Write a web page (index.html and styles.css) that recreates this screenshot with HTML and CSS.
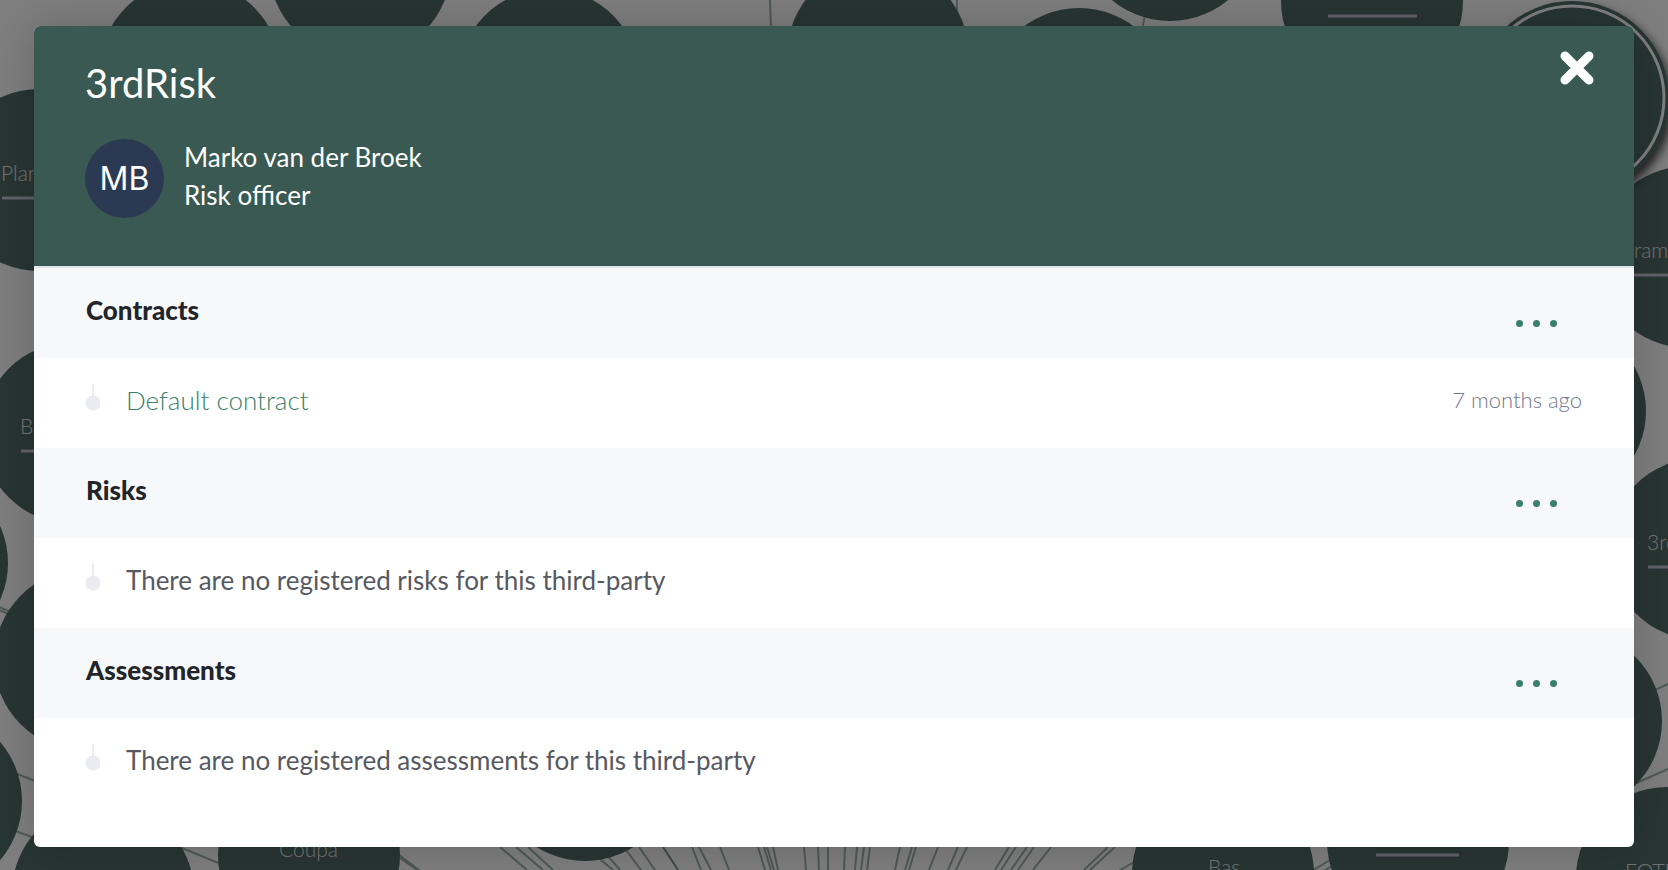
FILE: index.html
```html
<!DOCTYPE html>
<html lang="en">
<head>
  <meta charset="UTF-8">
  <meta name="viewport" content="width=device-width, initial-scale=1.0">
  <title>3rdRisk</title>
  <link rel="stylesheet" href="styles.css">
</head>
<body>
  <!-- third-party graph behind the modal -->
  <svg class="graph" width="1668" height="870" aria-hidden="true">
    <defs>
      <filter id="node-shadow" x="-20%" y="-20%" width="140%" height="140%">
        <feDropShadow dx="4" dy="6" stdDeviation="5" flood-color="#000" flood-opacity="0.7"/>
      </filter>
    </defs>
    <g class="edges">
      <path d="M770 0L771 30M957 0L956 30M1146 10L1142 30"/>
      <path d="M-10 603L20 616M-10 606L20 619M10 771L40 783M10 829L40 840M170 843L240 872"/>
      <path d="M390 851L420 872M394 851L424 874M500 847L527 870M516 847L543 870M528 847L553 870"/>
      <path d="M594 854L613 870M600 847L620 870M620 842L641 870M639 847L655 870"/>
      <path d="M692 847L701 870M699 847L711 870M720 847L729 870M758 847L765 870M764 847L771 870M767 847L774 870M773 847L778 870"/>
      <path d="M804 847L806 870M818 847L819 870M828 847L828 870M845 847L844 870M857 847L855 870M864 847L861 870M870 847L867 870"/>
      <path d="M900 847L895 870M912 847L905 870M916 847L909 870M938 847L929 870M958 847L948 870M967 847L956 870"/>
      <path d="M1009 847L995 870M1016 847L1001 870M1027 847L1011 870M1034 847L1018 870M1051 847L1033 870"/>
      <path d="M1108 847L1084 870M1115 847L1090 870M1134 862L1117 872M1300 878L1335 857M1300 886L1335 864M1560 879L1590 866"/>
      <path d="M1640 697L1668 684M1630 786L1668 769"/>
      <path class="edge-strong" d="M663 847L678 870"/>
    </g>
    <g class="nodes">
      <circle cx="190" cy="72" r="91"/>
      <circle cx="360" cy="-33" r="91"/>
      <circle cx="549" cy="80" r="91"/>
      <circle cx="878" cy="55" r="91"/>
      <circle cx="1079" cy="99" r="91"/>
      <circle cx="1170" cy="-70" r="91"/>
      <circle cx="1372" cy="1" r="91"/>
      <circle cx="1688" cy="257" r="91"/>
      <circle cx="1555" cy="411" r="91"/>
      <circle cx="1700" cy="549" r="91"/>
      <circle cx="1571" cy="721" r="91"/>
      <circle cx="1667" cy="878" r="91"/>
      <circle cx="1418" cy="841" r="91"/>
      <circle cx="1223" cy="874" r="91"/>
      <circle cx="585" cy="770" r="91"/>
      <circle cx="309" cy="855" r="91"/>
      <circle cx="103" cy="893" r="91"/>
      <circle cx="-69" cy="801" r="91"/>
      <circle cx="85" cy="660" r="91"/>
      <circle cx="-83" cy="563" r="91"/>
      <circle cx="73" cy="433" r="91"/>
      <circle cx="39" cy="180" r="91"/>
      <circle cx="1572" cy="98" r="97" filter="url(#node-shadow)"/>
    </g>
    <circle class="node-ring" cx="1572" cy="98" r="92"/>
    <g class="node-lines">
      <path d="M1328 16H1417M2 198H60M21 451H60M1600 275H1668M1648 567H1668M1376 855H1459"/>
    </g>
    <g class="node-labels">
      <text x="1" y="181">Plan</text>
      <text x="20" y="434">Br</text>
      <text x="1634" y="258">ram</text>
      <text x="1647" y="550">3rd</text>
      <text x="279" y="857">Coupa</text>
      <text x="1208" y="875">Bas</text>
      <text x="1625" y="879">FOTF</text>
    </g>
  </svg>

  <div class="backdrop">
    <div class="modal" role="dialog" aria-labelledby="modal-title">
      <header class="modal-header">
        <div>
          <h1 class="modal-title" id="modal-title">3rdRisk</h1>
          <div class="owner">
            <div class="avatar">MB</div>
            <div class="owner-info">
              <div>Marko van der Broek</div>
              <div>Risk officer</div>
            </div>
          </div>
        </div>
        <button class="close" type="button" aria-label="Close">
          <svg width="34" height="34" viewBox="0 0 34 34">
            <path d="M5 5L29 29M29 5L5 29"/>
          </svg>
        </button>
      </header>

      <section>
        <div class="section-head">
          <h2>Contracts</h2>
          <button class="more" type="button" aria-label="Contracts menu"><i></i><i></i><i></i></button>
        </div>
        <div class="item">
          <span class="pin"></span>
          <a class="item-link" href="#">Default contract</a>
          <span class="item-time">7 months ago</span>
        </div>
      </section>

      <section>
        <div class="section-head">
          <h2>Risks</h2>
          <button class="more" type="button" aria-label="Risks menu"><i></i><i></i><i></i></button>
        </div>
        <div class="item">
          <span class="pin"></span>
          <span>There are no registered risks for this third-party</span>
        </div>
      </section>

      <section>
        <div class="section-head">
          <h2>Assessments</h2>
          <button class="more" type="button" aria-label="Assessments menu"><i></i><i></i><i></i></button>
        </div>
        <div class="item">
          <span class="pin"></span>
          <span>There are no registered assessments for this third-party</span>
        </div>
      </section>
    </div>
  </div>
</body>
</html>
```
FILE: styles.css
```css
* {
  box-sizing: border-box;
}
body {
  margin: 0;
  font-family: Lato, "Open Sans", sans-serif;
  font-size: 26px;
  line-height: 36px;
  color: #575962;
  background: #fff;
  overflow: hidden;
}

/* graph */
.graph {
  position: absolute;
  top: 0;
  left: 0;
}
.edges path {
  stroke: #9fb2ac;
  stroke-width: 2;
  fill: none;
}
.edges .edge-strong {
  stroke: #7c968e;
}
.nodes circle {
  fill: #506c66;
}
.node-ring {
  fill: none;
  stroke: #fff;
  stroke-width: 3;
}
.node-lines path {
  stroke: #c4c4d6;
  stroke-width: 3;
}
.node-labels text {
  font-size: 21px;
  font-weight: 300;
  fill: #e6e8ea;
}

/* modal */
.backdrop {
  position: relative;
  min-height: 100vh;
  padding: 26px 34px 23px;
  background: rgba(0, 0, 0, 0.5);
}
.modal {
  background: #fff;
  border-radius: 6px;
  box-shadow: 0 0 50px rgba(0, 0, 0, 0.2);
  padding-bottom: 39px;
  overflow: hidden;
}
.modal-header {
  display: flex;
  justify-content: space-between;
  align-items: flex-start;
  padding: 25px 40px 48px 51px;
  background: #395952;
  border-bottom: 2px solid #e2e5ec;
  color: #fff;
}
.modal-title {
  margin: 0 0 24px;
  font-size: 40px;
  font-weight: 400;
  line-height: 64px;
}
.owner {
  display: flex;
  align-items: flex-start;
  gap: 20px;
}
.owner-info {
  display: grid;
  gap: 2px;
}
.avatar {
  width: 79px;
  height: 79px;
  border-radius: 50%;
  background: #2b3a52;
  font-family: Inter, sans-serif;
  font-size: 32px;
  line-height: 79px;
  text-align: center;
}
.close {
  padding: 0;
  border: 0;
  background: none;
  cursor: pointer;
}
.close svg {
  display: block;
}
.close path {
  stroke: #fff;
  stroke-width: 9;
  stroke-linecap: round;
}

.section-head,
.item {
  display: flex;
  align-items: center;
  height: 90px;
  padding: 0 52px 6px;
}
.section-head {
  justify-content: space-between;
  padding-right: 77px;
  background: #f7f8fa;
}
.section-head h2 {
  margin: 0;
  font-size: 26px;
  font-weight: 900;
  color: #212529;
}
.more {
  display: flex;
  gap: 10px;
  padding: 26px 0 0;
  border: 0;
  background: none;
  cursor: pointer;
}
.more i {
  width: 7px;
  height: 7px;
  border-radius: 50%;
  background: #3a7f68;
}

.item {
  gap: 26px;
}
.pin {
  width: 14px;
  height: 32px;
  background:
    linear-gradient(#ebecf1, #ebecf1) center top / 2px 16px no-repeat,
    radial-gradient(circle at 7px 19px, #ebecf1 7px, transparent 8px);
}
.item-link {
  font-weight: 300;
  color: #3a7f68;
  text-decoration: none;
}
.item-time {
  margin-left: auto;
  font-size: 22px;
  font-weight: 300;
  color: #74788d;
}
```
